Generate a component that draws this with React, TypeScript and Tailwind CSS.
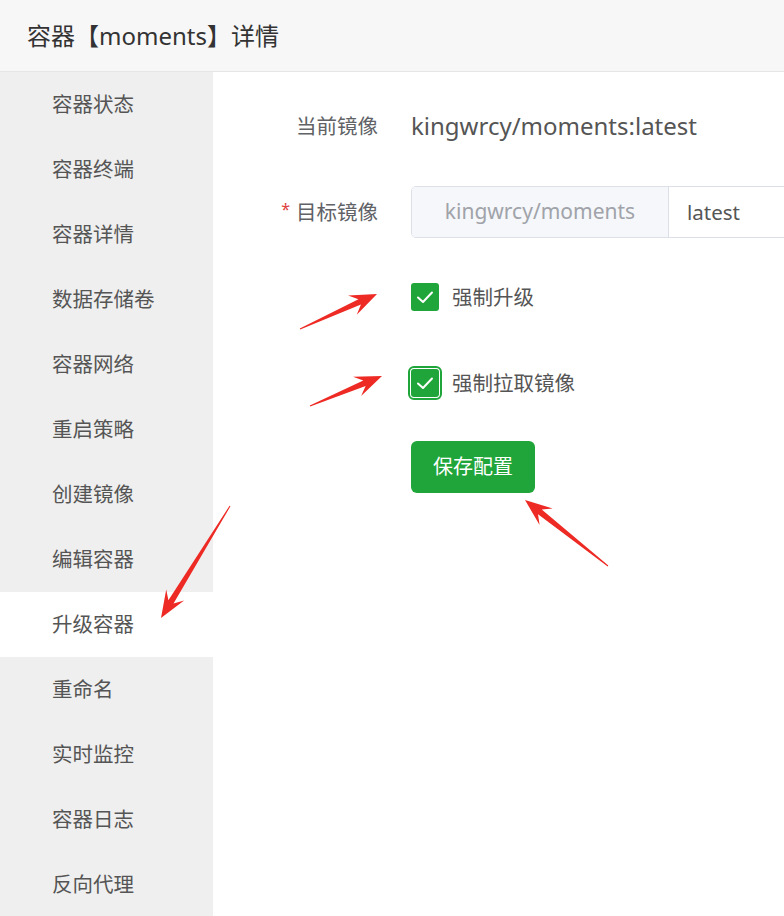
const menu = [
  '容器状态',
  '容器终端',
  '容器详情',
  '数据存储卷',
  '容器网络',
  '重启策略',
  '创建镜像',
  '编辑容器',
  '升级容器',
  '重命名',
  '实时监控',
  '容器日志',
  '反向代理',
];

const font = { fontFamily: '"Noto Sans", "Noto Sans CJK SC", sans-serif' };

// red annotation arrow: thin tail widening towards a notched head
const arrowPoints = (x1: number, y1: number, x2: number, y2: number) => {
  const dx = x2 - x1;
  const dy = y2 - y1;
  const len = Math.hypot(dx, dy);
  const ux = dx / len;
  const uy = dy / len;
  const nx = -uy;
  const ny = ux;
  const head = 27;
  const notch = 19;
  const half = 10.5;
  const shaft = 3;
  const p = (d: number, w: number) =>
    `${x2 - ux * d + nx * w},${y2 - uy * d + ny * w}`;
  return [
    `${x1 + nx * 0.5},${y1 + ny * 0.5}`,
    p(notch, shaft),
    p(head, half),
    `${x2},${y2}`,
    p(head, -half),
    p(notch, -shaft),
    `${x1 - nx * 0.5},${y1 - ny * 0.5}`,
  ].join(' ');
};

const arrows = [
  [300, 329, 377, 294],
  [310, 406, 382, 376],
  [608, 566, 525, 500],
  [230, 506, 161, 618],
];

const Check = () => (
  <svg width="18" height="14" viewBox="0 0 18 14" fill="none">
    <path d="M2 7.5 L7 12 L16 2.5" stroke="white" strokeWidth="2" strokeLinecap="round" strokeLinejoin="round" />
  </svg>
);

const App = () => {
  return (
    <div className="relative w-[784px] h-[916px] overflow-hidden bg-white" style={font}>
      {/* header */}
      <div className="h-[72px] bg-[#f7f7f7] border-b border-[#e6e6e6] flex items-center pl-[27px]">
        <span className="text-[24px] leading-none text-[#333]">容器【moments】详情</span>
      </div>

      <div className="flex">
        {/* sidebar */}
        <div className="w-[213px] shrink-0 bg-[#efefef]">
          {menu.map((item) => (
            <div
              key={item}
              className={`h-[65px] flex items-center pl-[52px] text-[20.5px] text-[#555] ${
                item === '升级容器' ? 'bg-white' : ''
              }`}
            >
              {item}
            </div>
          ))}
        </div>

        {/* form */}
        <div className="flex-1 flex flex-col">
          <div className="mt-[28px] h-[52px] flex items-center">
            <div className="w-[165px] text-right text-[20.5px] text-[#606266]">当前镜像</div>
            <div className="ml-[33px] text-[24px] text-[#555]">kingwrcy/moments:latest</div>
          </div>

          <div className="mt-[34px] h-[52px] flex items-center">
            <div className="w-[165px] text-right text-[20.5px] text-[#606266]">
              <span className="text-[#e0413c] text-[16px] mr-[6px] align-top">*</span>
              目标镜像
            </div>
            <div className="ml-[33px] flex h-[52px] w-[500px] shrink-0 rounded-[5px] border border-[#dcdfe6] overflow-hidden">
              <div className="w-[257px] bg-[#f5f7fa] border-r border-[#dcdfe6] flex items-center justify-center text-[21px] text-[#a0a3a9]">
                kingwrcy/moments
              </div>
              <div className="flex-1 flex items-center pl-[18px] text-[20.5px] text-[#555]">latest</div>
            </div>
          </div>

          <div className="mt-[33px] h-[52px] flex items-center pl-[198px]">
            <div className="w-[28px] h-[28px] rounded-[3px] bg-[#20a53a] flex items-center justify-center">
              <Check />
            </div>
            <span className="ml-[13px] text-[20.5px] text-[#555]">强制升级</span>
          </div>

          <div className="mt-[34px] h-[52px] flex items-center pl-[195px]">
            <div className="w-[34px] h-[34px] rounded-[6px] border-2 border-[#20a53a] p-[1px]">
              <div className="w-full h-full rounded-[3px] bg-[#20a53a] flex items-center justify-center">
                <Check />
              </div>
            </div>
            <span className="ml-[10px] text-[20.5px] text-[#555]">强制拉取镜像</span>
          </div>

          <div className="mt-[32px] pl-[198px]">
            <button className="w-[124px] h-[52px] rounded-[6px] bg-[#20a53a] text-white text-[20px]">
              保存配置
            </button>
          </div>
        </div>
      </div>

      {/* annotation arrows */}
      <svg className="absolute inset-0 pointer-events-none" width="784" height="916">
        {arrows.map(([x1, y1, x2, y2], i) => (
          <polygon key={i} points={arrowPoints(x1, y1, x2, y2)} fill="#ee2a24" />
        ))}
      </svg>
    </div>
  );
};

export default App;
